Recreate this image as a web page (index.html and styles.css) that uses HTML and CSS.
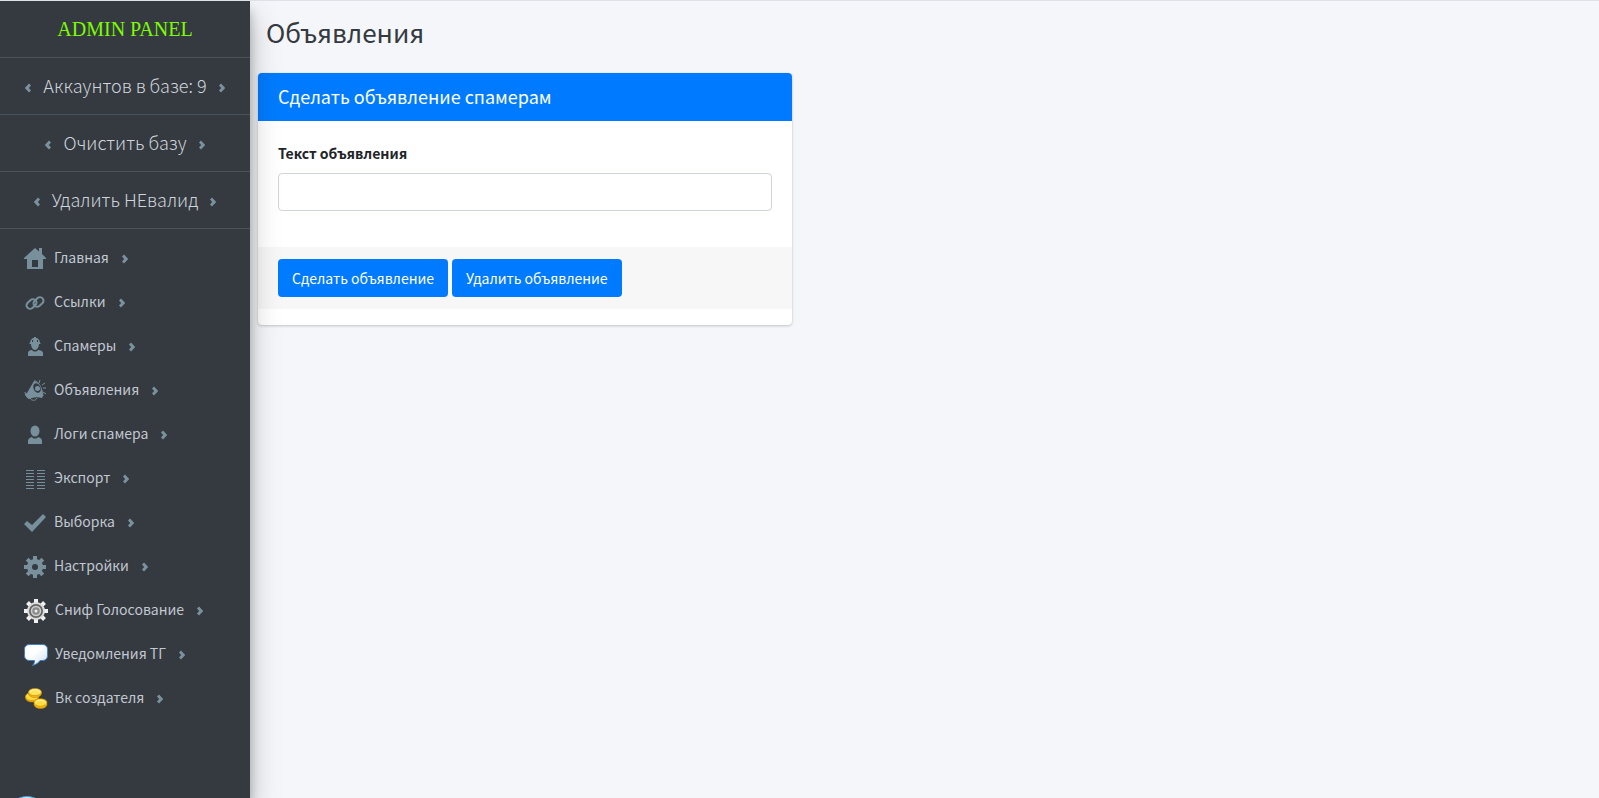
FILE: index.html
```
<!DOCTYPE html>
<html lang="ru">
<head>
    <meta charset="UTF-8">
    <meta name="viewport" content="width=device-width, initial-scale=1.0">
    <title>Объявления</title>
    <link rel="stylesheet" href="styles.css">
</head>
<body>
    <!-- Общие иконки -->
    <svg class="sprite" aria-hidden="true">
        <symbol id="right" viewBox="0 0 6 10">
            <path d="M0 2.500 2 .5 6.200 5 2 9.500 0 7.500 2.200 5z"/>
        </symbol>
        <symbol id="left" viewBox="0 0 6 10">
            <path d="M6 2.500 4 .5-.2 5 4 9.500l2-2L3.800 5z"/>
        </symbol>
    </svg>
    <aside class="sidebar">
        <a href="#" class="brand brand-name">ADMIN PANEL</a>
        <a href="#" class="brand"><svg class="arrow"><use href="#left"/></svg>Аккаунтов в базе: 9<svg class="arrow"><use href="#right"/></svg></a>
        <a href="#" class="brand"><svg class="arrow"><use href="#left"/></svg>Очистить базу<svg class="arrow"><use href="#right"/></svg></a>
        <a href="#" class="brand"><svg class="arrow"><use href="#left"/></svg>Удалить НЕвалид<svg class="arrow"><use href="#right"/></svg></a>
        <nav class="menu">
            <a href="#">
                <svg class="icon" viewBox="0 0 22 22"><path fill-rule="evenodd" d="M11 0l4 3.500V0h3v6l4 4v1h-3v10H3V11H0v-1zM8 12v7h6v-7z"/></svg>
                Главная<svg class="arrow"><use href="#right"/></svg>
            </a>
            <a href="#">
                <svg class="icon line" viewBox="0 0 22 22"><rect x="2" y="8.500" width="11" height="7" rx="3.500" transform="rotate(-42 7.500 12)"/><rect x="9" y="6.500" width="11" height="7" rx="3.500" transform="rotate(-42 14.500 10)"/></svg>
                Ссылки<svg class="arrow"><use href="#right"/></svg>
            </a>
            <a href="#">
                <svg class="icon" viewBox="0 0 22 22"><path d="M6 7c0-3 2-5 4-5V1h2v1c2 0 4 2 4 5l1 1H5zM7 8h8c0 3-2 6-4 6S7 11 7 8zM4 20v-3c0-2 2-3 4-3 1 2 5 2 6 0 2 0 5 1 5 3v3z"/><path class="cut" d="M8.500 4v2M13.500 4v2"/></svg>
                Спамеры<svg class="arrow"><use href="#right"/></svg>
            </a>
            <a href="#">
                <svg class="icon" viewBox="0 0 22 22"><path d="M10 1 3 13l-2 1c1 2 2 4 4 5l3-1c3-1 6-1 10 0l1-2C18 9 15 2 10 1z"/><path class="line" d="M1 12c0 3 2 6 4 6.500M6 18c1 3 6 3 7 0M10 1c3-1 8 5 9 15M15 3l1-3M18 5l3-2M19 8h3M19 12l3 2"/><ellipse class="hole" cx="13" cy="8" rx="3.500" ry="5" transform="rotate(-25 13 8)"/><circle cx="13.500" cy="8.500" r="2.500"/></svg>
                Объявления<svg class="arrow"><use href="#right"/></svg>
            </a>
            <a href="#">
                <svg class="icon" viewBox="0 0 22 22"><ellipse cx="11" cy="7" rx="4.500" ry="5.500"/><path d="M4 20v-3c0-2 1-3 4-4 1 2 5 2 6 0 3 1 4 2 4 4v3z"/></svg>
                Логи спамера<svg class="arrow"><use href="#right"/></svg>
            </a>
            <a href="#">
                <svg class="icon thin" viewBox="0 0 22 22"><path d="M2 2.500h8M13 2.500h8M2 5.500h8M13 5.500h8M2 8.500h8M13 8.500h8M2 11.500h8M13 11.500h8M2 14.500h8M13 14.500h8M2 17.500h8M13 17.500h8M2 20.500h8M13 20.500h8"/></svg>
                Экспорт<svg class="arrow"><use href="#right"/></svg>
            </a>
            <a href="#">
                <svg class="icon" viewBox="0 0 22 22"><path d="M0 12l3-3 5 4L19 2l3 3L8 20z"/></svg>
                Выборка<svg class="arrow"><use href="#right"/></svg>
            </a>
            <a href="#">
                <svg class="icon" viewBox="0 0 22 22"><circle class="ring" cx="11" cy="11" r="5.500"/><path class="teeth" d="M11 0v5M11 17v5M0 11h5M17 11h5M3.200 3.200l3.600 3.600M15.200 15.200l3.600 3.600M3.200 18.800l3.600-3.600M15.200 6.800l3.600-3.600"/></svg>
                Настройки<svg class="arrow"><use href="#right"/></svg>
            </a>
            <a href="#">
                <svg class="icon big" viewBox="0 0 24 24">
                    <path stroke="#f1f1f1" stroke-width="4" d="M12 0v5M12 19v5M0 12h5M19 12h5M3.500 3.500 7 7M17 17l3.500 3.500M3.500 20.500 7 17M17 7l3.500-3.500"/>
                    <circle cx="12" cy="12" r="8" fill="#666" stroke="#dcdcdc" stroke-width="2"/>
                    <circle cx="12" cy="12" r="4.500" fill="#8b8b8b" stroke="#cfcfcf" stroke-width="1.500"/>
                    <circle cx="12" cy="12" r="1.500" fill="#eee"/>
                </svg>
                Сниф Голосование<svg class="arrow"><use href="#right"/></svg>
            </a>
            <a href="#">
                <svg class="icon big" viewBox="0 0 24 24">
                    <defs><linearGradient id="bubble" x1="0" y1="0" x2="1" y2="1"><stop offset=".4" stop-color="#fff"/><stop offset="1" stop-color="#cfe0f0"/></linearGradient></defs>
                    <path fill="url(#bubble)" stroke="#3f7fc4" d="M6 1.500h12c3.500 0 5.500 1.500 5.500 5v6c0 3.500-2 5-5.500 5h-2c-1 2-4 4-7.500 5 1.500-1.500 2-3 2-5H6c-3.500 0-5.500-1.500-5.500-5v-6c0-3.500 2-5 5.500-5z"/>
                </svg>
                Уведомления ТГ<svg class="arrow"><use href="#right"/></svg>
            </a>
            <a href="#">
                <svg class="icon big" viewBox="0 0 24 24">
                    <g fill="#f3b60d" stroke="#c98a06" stroke-width=".6">
                        <ellipse cx="8" cy="11" rx="6.500" ry="4"/>
                        <ellipse cx="8" cy="9.500" rx="6.500" ry="4" fill="#ffd93b"/>
                        <ellipse cx="11" cy="6.500" rx="6.500" ry="4"/>
                        <ellipse cx="11" cy="5" rx="6.500" ry="3.600" fill="#ffe45c"/>
                        <ellipse cx="16.500" cy="17.500" rx="6.500" ry="4"/>
                        <ellipse cx="16.500" cy="15.500" rx="6.500" ry="3.800" fill="#ffdc3f"/>
                    </g>
                    <path fill="none" stroke="#fff6b8" d="M7 5c0-3 8-3 8 0M12.500 15.500c0-3 8-3 8 0"/>
                </svg>
                Вк создателя<svg class="arrow"><use href="#right"/></svg>
            </a>
        </nav>
        <span class="bottom-circle"></span>
    </aside>
    <main>
        <h1>Объявления</h1>
        <form class="card">
            <h3>Сделать объявление спамерам</h3>
            <div class="card-body">
                <label for="text">Текст объявления</label>
                <input type="text" id="text">
            </div>
            <div class="card-footer">
                <button type="button">Сделать объявление</button>
                <button type="button">Удалить объявление</button>
            </div>
        </form>
    </main>
</body>
</html>
```
FILE: styles.css
```
* {
    box-sizing: border-box;
}
body {
    display: flex;
    min-height: 100vh;
    margin: 0;
    border-top: 1px solid #dee2e6;
    background-color: #f4f6f9;
    color: #212529;
    font-family: "Noto Sans CJK SC", "Noto Sans", sans-serif;
    font-size: 14px;
    line-height: 24px;
}
.sprite {
    position: absolute;
    width: 0;
    height: 0;
}

/* Боковая панель */
.sidebar {
    position: relative;
    z-index: 1;
    flex: 0 0 250px;
    overflow: hidden;
    background-color: #343a40;
    box-shadow: 0 14px 28px rgba(0, 0, 0, 0.25), 0 10px 10px rgba(0, 0, 0, 0.22);
}
.sidebar a {
    display: flex;
    align-items: center;
    color: #c2c7d0;
    text-decoration: none;
}
.sidebar a:hover {
    color: #fff;
}
.sidebar .brand {
    justify-content: center;
    gap: 12px;
    height: 57px;
    padding-bottom: 2px;
    border-bottom: 1px solid #4b545c;
    color: #d0d4db;
    font-size: 18px;
    font-weight: 300;
}
.sidebar .brand-name {
    padding-bottom: 0;
    color: #7cfc00;
    font-family: "Liberation Serif", serif;
    font-size: 20px;
    font-weight: 400;
}
.arrow {
    width: 6px;
    height: 10px;
    margin-top: 5px;
    fill: #7b929e;
}
.menu {
    display: flex;
    flex-direction: column;
    gap: 4px;
    padding: 8px;
}
.menu a {
    height: 40px;
    padding: 0 16px;
}
.menu .arrow {
    margin-left: 13px;
    margin-top: 3px;
}
.icon {
    width: 22px;
    height: 22px;
    margin-top: 3px;
    margin-right: 8px;
    fill: #78909c;
}
.icon.big {
    width: 24px;
    height: 24px;
    margin-right: 7px;
}
.line {
    fill: none;
    stroke: #78909c;
    stroke-width: 2;
}
path.line {
    stroke-width: 1;
}
.thin {
    stroke: #78909c;
}
.cut {
    stroke: #343a40;
}
.hole {
    fill: #343a40;
}
.ring {
    fill: none;
    stroke: #78909c;
    stroke-width: 5;
}
.teeth {
    stroke: #78909c;
    stroke-width: 4;
}
.bottom-circle {
    position: absolute;
    left: 6px;
    bottom: -40px;
    width: 42px;
    height: 42px;
    border: 1px solid #4d9fd6;
    border-radius: 50%;
    background-color: #d5e9f5;
}

/* Содержимое */
main {
    flex: 1;
    padding: 0 7px 0 8px;
}
h1 {
    margin: 0;
    padding: 13px 8px 24px;
    color: #343a40;
    font-size: 26px;
    font-weight: 400;
    line-height: 35px;
}
.card {
    width: 40%;
    padding-bottom: 16px;
    border-radius: 4px;
    background-color: #fff;
    box-shadow: 0 0 1px rgba(0, 0, 0, 0.125), 0 1px 3px rgba(0, 0, 0, 0.2);
}
.card h3 {
    margin: 0;
    padding: 11px 20px 13px;
    border-radius: 4px 4px 0 0;
    background-color: #007bff;
    color: #fff;
    font-size: 18px;
    font-weight: 400;
}
.card-body {
    padding: 20px 20px 36px;
}
.card-body label {
    display: block;
    margin-bottom: 8px;
    font-weight: 700;
}
.card-body input {
    display: block;
    width: 100%;
    height: 38px;
    padding: 6px 12px;
    border: 1px solid #ced4da;
    border-radius: 4px;
    font: inherit;
}
.card-footer {
    display: flex;
    gap: 4px;
    padding: 12px 20px;
    background-color: #f7f7f7;
}
.card-footer button {
    height: 38px;
    padding: 0 14px;
    border: none;
    border-radius: 4px;
    background-color: #007bff;
    color: #fff;
    font: inherit;
    cursor: pointer;
}
.card-footer button:hover {
    background-color: #0069d9;
}
```
